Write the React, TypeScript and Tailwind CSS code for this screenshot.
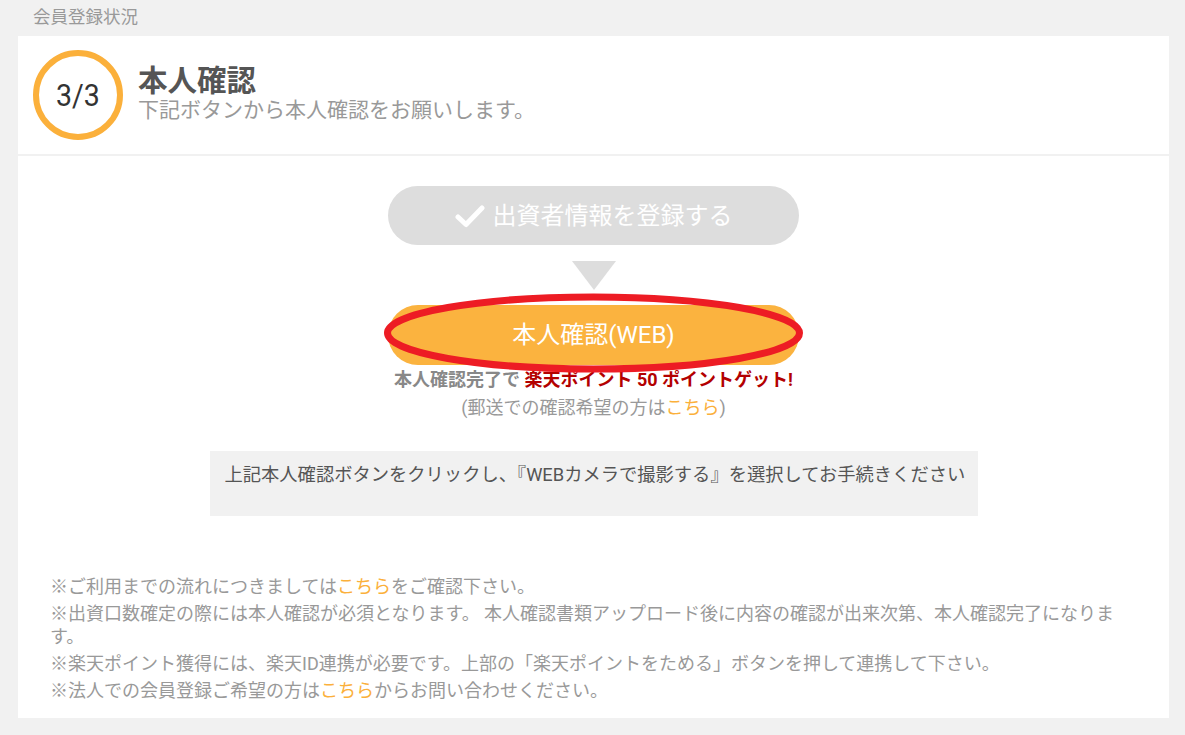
import React from 'react';

const font = { fontFamily: 'Roboto, "Noto Sans CJK JP", sans-serif' };

function StepCircle() {
  return (
    <div className="w-[90px] h-[90px] rounded-full border-[6px] border-[#fbb03b] flex items-center justify-center shrink-0">
      <span className="text-[31px] text-[#333] leading-none scale-x-[0.92]">3/3</span>
    </div>
  );
}

function Check() {
  return (
    <svg width="30" height="24" viewBox="0 0 30 24" className="mr-[8px]">
      <path d="M3 13 L11 20.5 L27 4" fill="none" stroke="#ffffff" strokeWidth="5" strokeLinecap="round" strokeLinejoin="round" />
    </svg>
  );
}

function App() {
  return (
    <div className="min-h-[735px] bg-[#f1f1f1] pl-[18px] pr-[16px] pb-[17px]" style={font}>
      <div className="pl-[15px] pt-[5px] h-[36px] text-[17.5px] text-[#999] leading-[24px]">会員登録状況</div>
      <div className="bg-white">
        <div className="flex items-center h-[120px] pl-[15px] border-b-2 border-[#f1f1f1]">
          <StepCircle />
          <div className="ml-[15px] -mt-[3px]">
            <div className="text-[29.5px] font-bold text-[#555] leading-[32px]">本人確認</div>
            <div className="text-[21px] text-[#999] leading-[26px]">下記ボタンから本人確認をお願いします。</div>
          </div>
        </div>

        <div className="flex flex-col items-center pt-[30px]">
          <div className="w-[411px] h-[59px] rounded-full bg-[#dddddd] flex items-center justify-center text-white text-[24px]">
            <Check />
            出資者情報を登録する
          </div>
          <div className="mt-[16px] w-0 h-0 border-l-[22px] border-r-[22px] border-t-[29px] border-l-transparent border-r-transparent border-t-[#dddddd]" />
          <div className="relative mt-[15px]">
            <div className="w-[411px] h-[60px] rounded-full bg-[#fbb33f] flex items-center justify-center text-white text-[24px]">
              本人確認(WEB)
            </div>
            <svg className="absolute left-[-6px] top-[-16px]" width="423" height="84" viewBox="0 0 423 84">
              <ellipse cx="211.5" cy="44" rx="206" ry="36" fill="none" stroke="#ed1c24" strokeWidth="7" />
            </svg>
          </div>
          <div className="mt-[3px] text-[18px] font-bold leading-[24px]">
            <span className="text-[#888]">本人確認完了で </span>
            <span className="text-[#b30000]">楽天ポイント 50 ポイントゲット!</span>
          </div>
          <div className="mt-[4px] text-[18px] text-[#999] leading-[24px]">
            (郵送での確認希望の方は<span className="text-[#fbb03b]">こちら</span>)
          </div>
          <div className="mt-[31px] w-[768px] h-[65px] bg-[#f1f1f1] px-[15px] pt-[11px] text-[18.3px] text-[#555] leading-[26px] whitespace-nowrap">
            上記本人確認ボタンをクリックし、『WEBカメラで撮影する』を選択してお手続きください
          </div>
        </div>

        <div className="pl-[32px] pr-[45px] pt-[59px] pb-[16px] text-[18px] text-[#999] leading-[23px] flex flex-col gap-[4px]">
          <p>※ご利用までの流れにつきましては<span className="text-[#fbb03b]">こちら</span>をご確認下さい。</p>
          <p>※出資口数確定の際には本人確認が必須となります。 本人確認書類アップロード後に内容の確認が出来次第、本人確認完了になります。</p>
          <p>※楽天ポイント獲得には、楽天ID連携が必要です。上部の「楽天ポイントをためる」ボタンを押して連携して下さい。</p>
          <p>※法人での会員登録ご希望の方は<span className="text-[#fbb03b]">こちら</span>からお問い合わせください。</p>
        </div>
      </div>
    </div>
  );
}

export default App;
